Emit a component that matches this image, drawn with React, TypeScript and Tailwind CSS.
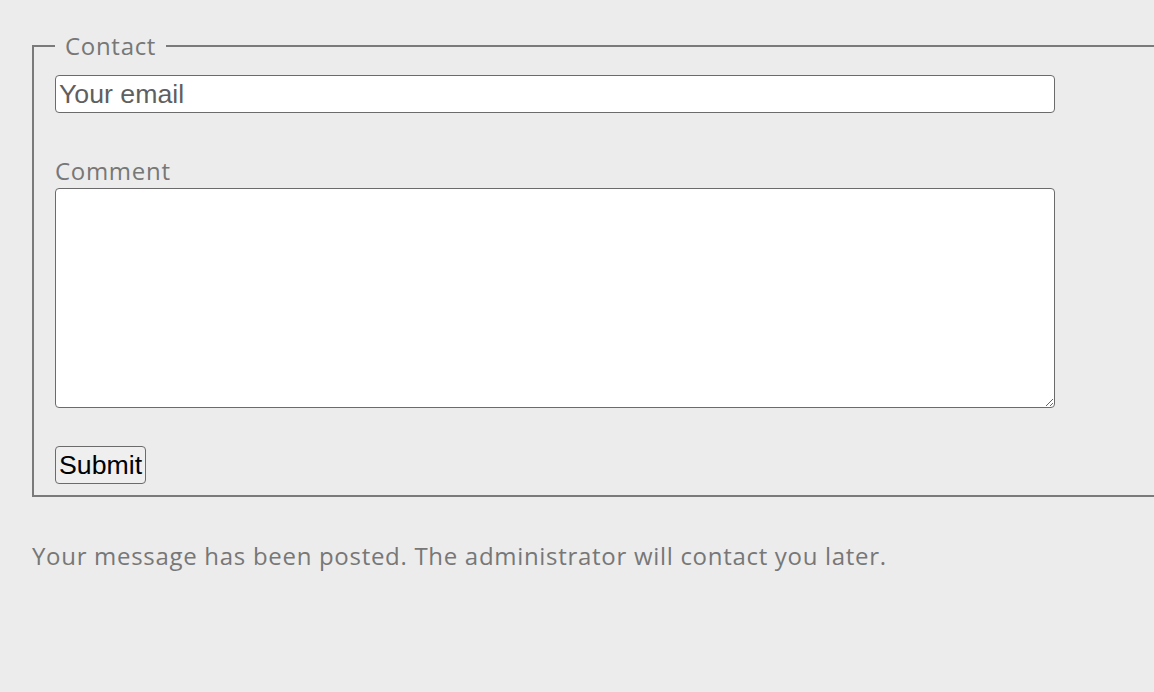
export default function App() {
  return (
    <div className="min-h-[692px] w-full overflow-hidden bg-[#ececec] pt-[30px] font-['Open_Sans',sans-serif] tracking-[0.7px] text-[#777777]">
      <fieldset className="ml-[32px] w-[1140px] border-2 border-[#7a7a7a] pb-[11px] pl-[21px] pr-[20px]">
        <legend className="px-[10px] text-[24px] leading-[32px]">Contact</legend>
        <div className="pt-[13px]">
          <input
            type="text"
            placeholder="Your email"
            className="block h-[38px] w-[1000px] rounded-[4px] border border-[#6b6b6b] bg-white px-[3px] font-['Liberation_Sans',Arial,sans-serif] text-[26.7px] tracking-normal text-black outline-none placeholder:text-[#5f5f5f]"
          />
        </div>
        <label className="mt-[43px] block text-[24px] leading-[30px]">Comment</label>
        <textarea className="mt-[2px] block h-[220px] w-[1000px] rounded-[4px] border border-[#6b6b6b] bg-white outline-none" />
        <button
          type="button"
          className="mt-[38px] block h-[38px] rounded-[4px] border border-[#6b6b6b] bg-[#efefef] px-[3px] font-['Liberation_Sans',Arial,sans-serif] text-[26.7px] leading-[30px] tracking-normal text-black"
        >
          Submit
        </button>
      </fieldset>
      <p className="ml-[32px] mt-[43px] text-[24px] leading-[32px]">
        Your message has been posted. The administrator will contact you later.
      </p>
    </div>
  );
}
